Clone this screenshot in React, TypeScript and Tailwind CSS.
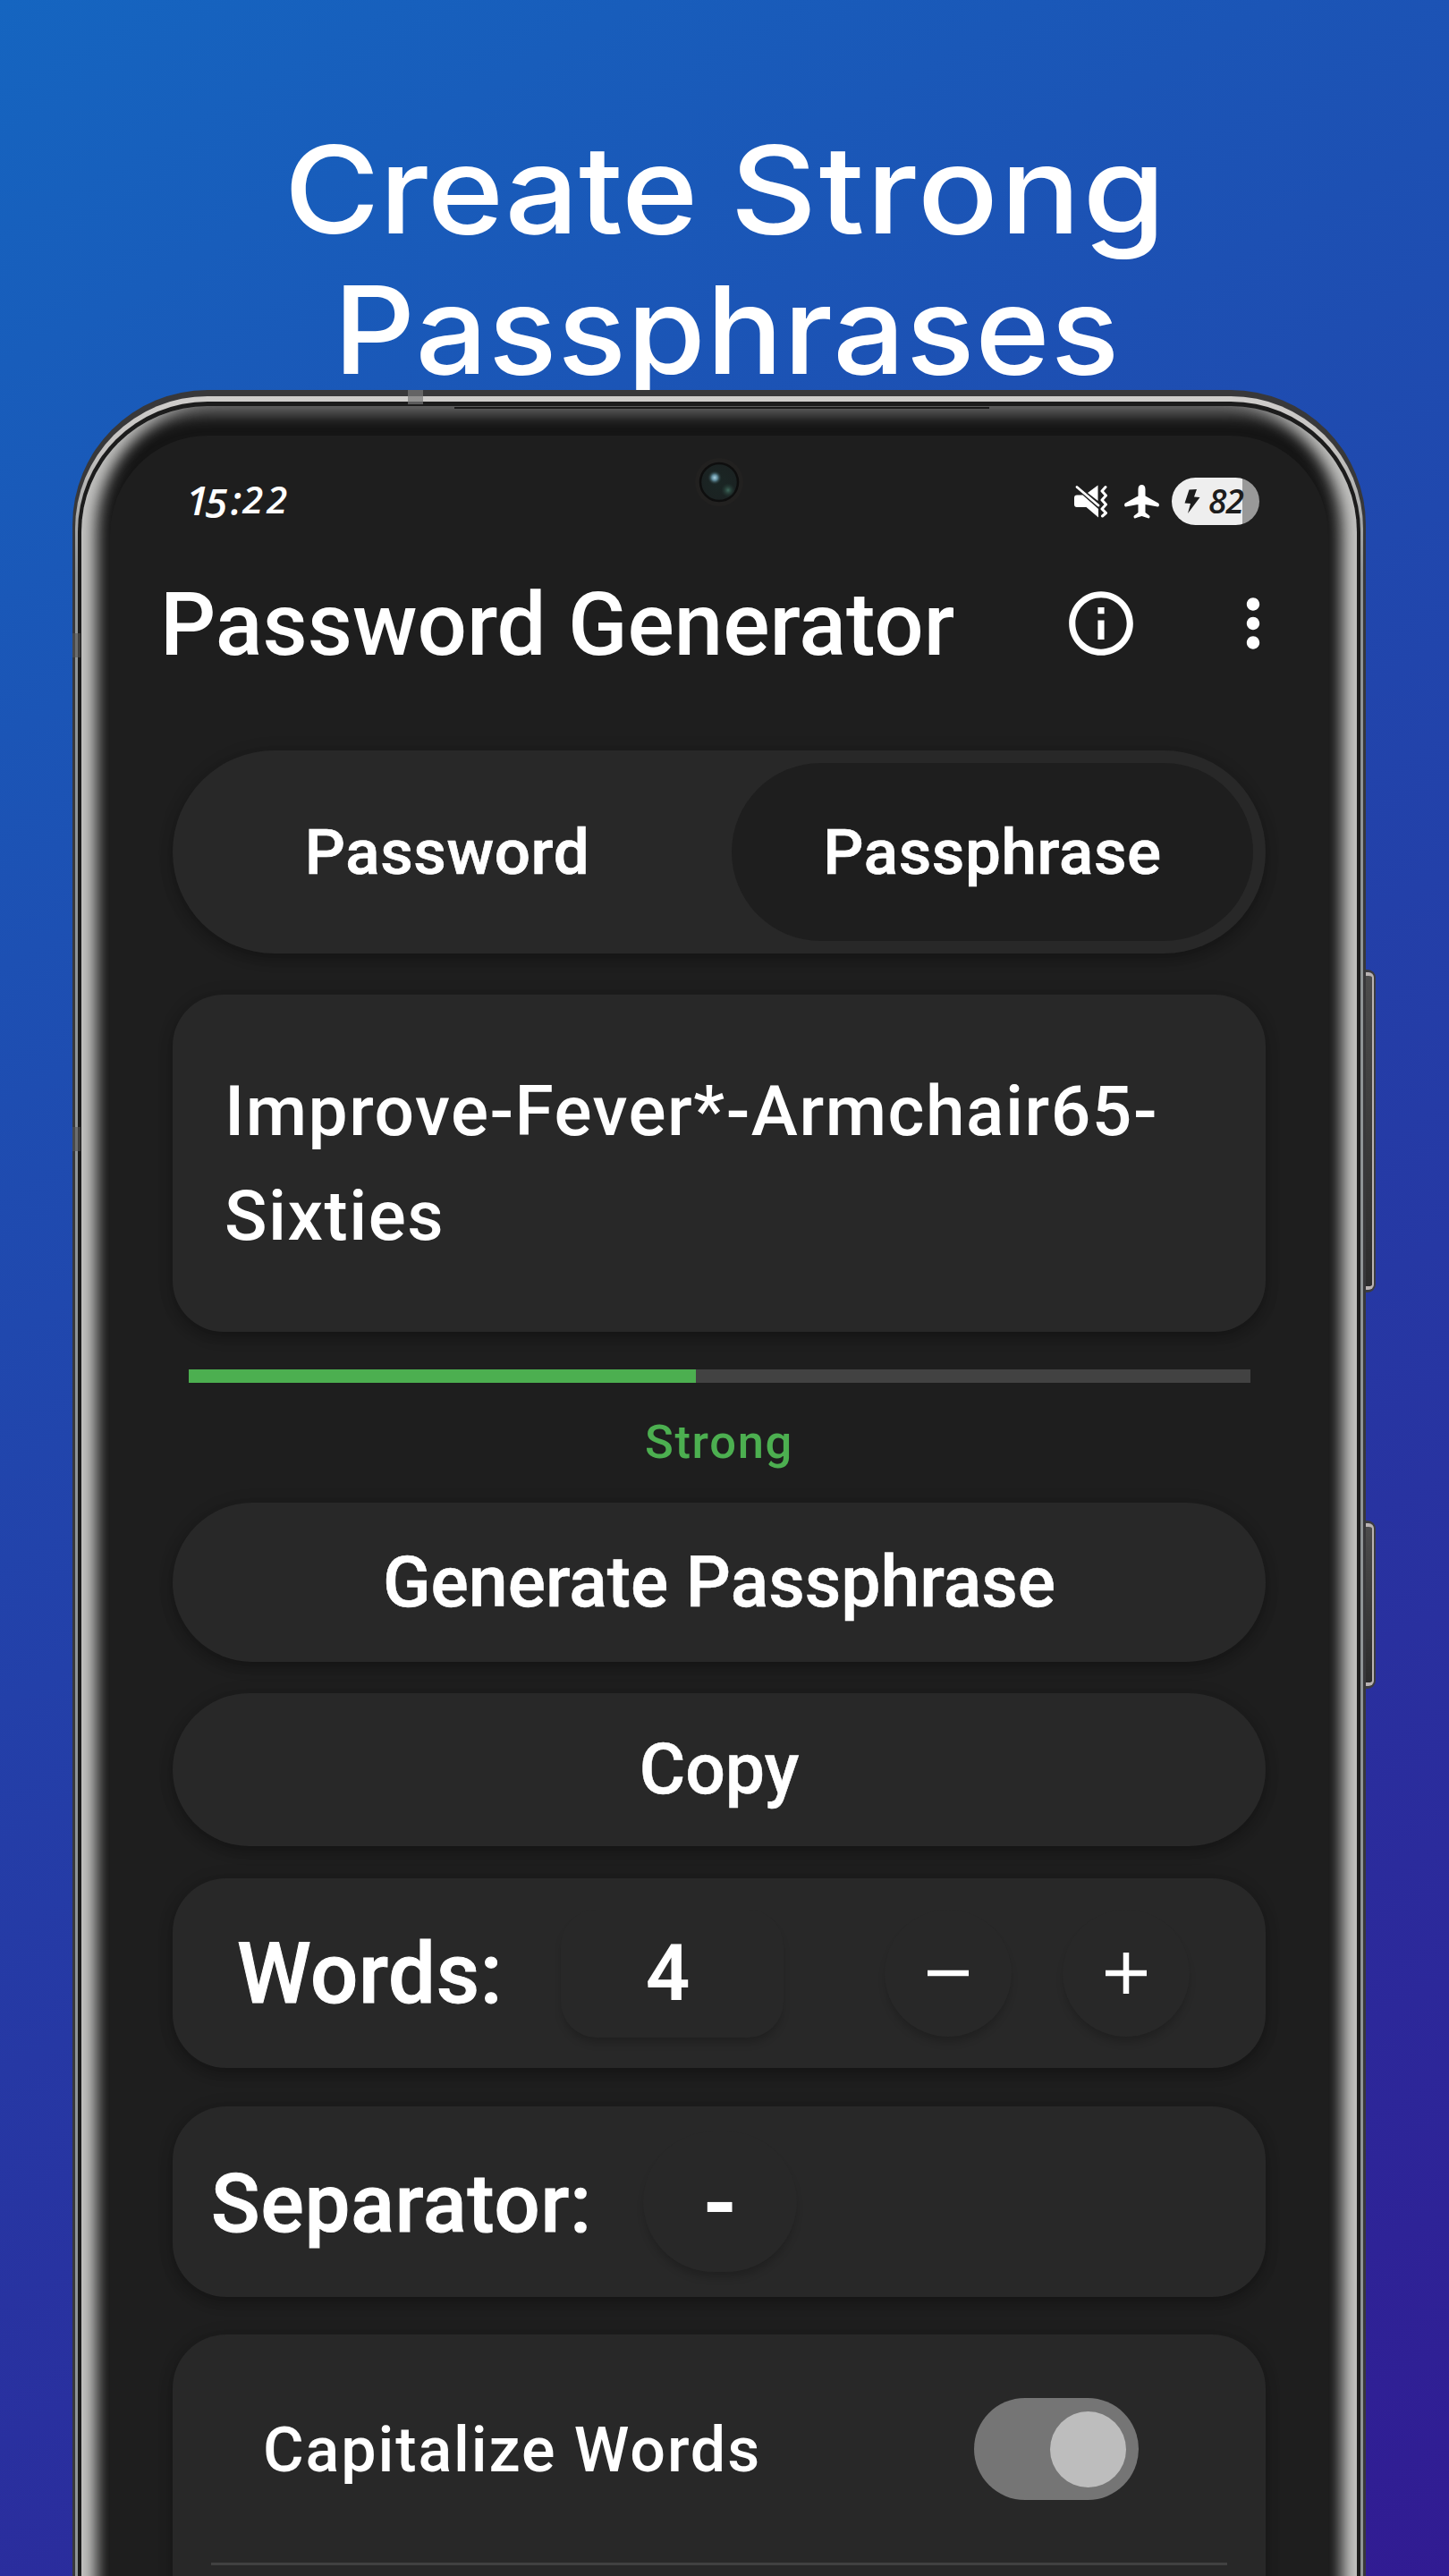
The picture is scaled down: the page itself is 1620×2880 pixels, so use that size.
import type { ReactNode } from "react";
import { MdInfoOutline, MdMoreVert } from "react-icons/md";

const SHADOW = "shadow-[0_8px_14px_0_rgba(0,0,0,0.22),0_0_18px_rgba(0,0,0,0.12)]";
const SOFT = "shadow-[0_8px_10px_-2px_rgba(0,0,0,0.2)]";

function StatusBar() {
  return (
    <div className="flex h-[53px] items-center pl-[85px] pr-[77px]">
      <div className="flex -translate-y-[3px] items-center font-['Open_Sans'] text-[46px] font-semibold italic leading-none tracking-[-1px] text-white">
        <span className="w-[21px]">1</span>
        <span className="w-[27px] translate-y-[3px]">5</span>
        <span className="w-[15px] text-center">:</span>
        <span className="w-[27px] text-[42px]">2</span>
        <span className="w-[24px] text-[42px]">2</span>
      </div>
      <svg viewBox="0 0 37 38" className="ml-auto h-[38px] w-[37px]" fill="#fff">
        <path d="M3 11.5h6.500L27 27v9.500L13.500 25H3a3 3 0 0 1-3-3v-7.500a3 3 0 0 1 3-3z" />
        <path d="M15 9 26.500.5V18z" />
        <path d="M3 2.500 27 23" stroke="#fff" strokeWidth="2.800" strokeLinecap="round" fill="none" />
        <path d="M35 2.500 31 7l4.500 5L31 17l4.500 5L31 27l4.500 4.500L31.500 35" stroke="#fff" strokeWidth="3" strokeLinecap="round" strokeLinejoin="round" fill="none" />
      </svg>
      <svg viewBox="0 0 39 38" className="ml-[19px] h-[38px] w-[39px]" fill="#fff">
        <path d="M19.500 0c2.400 0 4 1.800 4 5v7.500L38 20.500c1.500 1 1 4.500-.8 4L23.500 22v9l4.500 3.600c1 .9.500 3-.9 2.800L19.500 35l-7.600 2.400c-1.400.2-1.900-1.900-.9-2.800l4.500-3.600v-9L1.800 24.500c-1.800.5-2.300-3-.8-4l14.500-8V5c0-3.200 1.600-5 4-5z" />
      </svg>
      <div className="ml-[14px] flex h-[53px] w-[98px] items-center rounded-full bg-[linear-gradient(90deg,#eeeeee_80.5%,#999999_80.5%)] pl-[14px]">
        <svg viewBox="0 0 18 27" className="h-[27px] w-[18px]" fill="#1c1c1c">
          <path d="M5.500.5 14 0l-3 8.500 6.500.5L4 27l3-11-6.500-.5z" />
        </svg>
        <span className="ml-[9px] -translate-y-[1px] font-['Open_Sans'] text-[37px] font-semibold italic leading-none tracking-[-1px] text-[#1c1c1c]">82</span>
      </div>
    </div>
  );
}

function Camera() {
  return (
    <svg viewBox="0 0 56 56" className="absolute left-[653px] top-[24px] h-14 w-14">
      <defs>
        <radialGradient id="lens">
          <stop offset="0" stopColor="#1a2624" />
          <stop offset="1" stopColor="#1b2222" />
        </radialGradient>
        <radialGradient id="glint">
          <stop offset="0" stopColor="#a9d0e0" />
          <stop offset="0.4" stopColor="#5f8a9a" />
          <stop offset="1" stopColor="#1b2825" stopOpacity="0" />
        </radialGradient>
        <radialGradient id="glow">
          <stop offset="0" stopColor="#3f6a5c" />
          <stop offset="1" stopColor="#1f3530" stopOpacity="0" />
        </radialGradient>
      </defs>
      <circle cx="28" cy="28" r="27" fill="#222120" />
      <circle cx="28" cy="28" r="21" fill="url(#lens)" stroke="#0e0e0e" strokeWidth="2.500" />
      <circle cx="23" cy="23" r="8" fill="url(#glint)" />
      <circle cx="38" cy="37" r="8" fill="url(#glow)" />
    </svg>
  );
}

function ActionButton({ className, children }: { className: string; children: ReactNode }) {
  return (
    <button className={`flex w-full items-center justify-center rounded-full bg-[#282828] text-[78.800px] font-medium leading-none text-white [-webkit-text-stroke:0.5px_#fff] ${SHADOW} ${className}`}>
      {children}
    </button>
  );
}

function SideKey({ className }: { className: string }) {
  return (
    <div className={`absolute -right-[11px] w-[11px] rounded-r-[9px] bg-[#3c3c40] py-[3px] pr-[2px] ${className}`}>
      <div className="h-full rounded-r-[6px] border-y-4 border-r-2 border-[#b9b3b3] bg-gradient-to-b from-[#4c4c4c] to-[#2c2c2c]" />
    </div>
  );
}

export default function App() {
  return (
    <div className="relative flex h-[2880px] w-[1620px] flex-col overflow-hidden whitespace-nowrap bg-[linear-gradient(150deg,#1565c0,#311b92)] font-[Roboto,sans-serif]">
      <h1 className="flex h-[436px] shrink-0 flex-col items-center pt-[133px] font-[Inter,sans-serif] text-[136px] font-medium leading-[157px] text-white">
        <span className="flex -translate-x-[5px]">
          <span className="w-[512px] scale-x-[1.068] text-center">Create</span>{" "}
          <span className="w-[512px] scale-x-[1.1] text-center tracking-[2px]">Strong</span>
        </span>
        <span className="translate-x-[3px] scale-x-[1.045] tracking-[0.85px]">Passphrases</span>
      </h1>

      <div className="relative ml-[81px] flex w-[1446px] grow flex-col rounded-t-[151px] bg-[#38383a] px-[3px] pt-[7px]">
        <SideKey className="top-[648px] h-[361px]" />
        <SideKey className="top-[1264px] h-[188px]" />
        <div className="flex grow flex-col rounded-t-[148px] bg-[linear-gradient(180deg,#cfcdcb_0px,#c4c2c0_60px,#8f9496_200px)] px-[3px] pt-[6px]">
          <div className="flex grow flex-col rounded-t-[145px] bg-[#1c1c1c] px-[4px] pt-[5px]">
            <div className="flex grow flex-col rounded-t-[141px] bg-[#151515] px-[32px] pt-[33px] shadow-[inset_33px_0_18px_-16px_#c2c2c0,inset_-33px_0_18px_-16px_#c2c2c0,inset_0_10px_16px_0_#626262]">
              <main className="relative flex grow flex-col rounded-t-[110px] bg-[#1e1e1e]">
                <Camera />
                <div className="pt-[47px]">
                  <StatusBar />
                </div>

                <header className="mt-[55px] flex h-[110px] items-center pl-[56px] text-white">
                  <h2 className="translate-y-[2px] text-[97.700px] font-medium leading-none">Password Generator</h2>
                  <MdInfoOutline className="absolute left-[1065px] h-[86px] w-[86px]" />
                  <MdMoreVert className="absolute left-[1235px] h-[86px] w-[86px]" />
                </header>

                <div className="flex flex-col pl-[70px] pr-[70px] text-white">
                  <div className={`mt-[87px] flex h-[227px] rounded-full bg-[#282828] p-[14px] text-[71px] font-medium leading-none tracking-[0.600px] [-webkit-text-stroke:0.7px_#fff] ${SHADOW}`}>
                    <div className="flex w-[611px] items-center justify-center pr-[25px]">Password</div>
                    <div className="flex grow items-center justify-center rounded-full bg-[#1e1e1e]">Passphrase</div>
                  </div>

                  <div className={`mt-[46px] h-[377px] rounded-[57px] bg-[#282828] pl-[58px] pt-[72px] text-[78.500px] font-medium leading-[116.500px] tracking-[1.500px] ${SHADOW}`}>
                    Improve-Fever*-Armchair65-
                    <br />
                    Sixties
                  </div>

                  <div className="ml-[18px] mr-[17px] mt-[42px] h-[15px] bg-[#424242]">
                    <div className="h-full w-[567px] bg-[#4caf50]" />
                  </div>
                  <div className="mt-[36px] h-[60px] text-center text-[52.500px] font-medium leading-[60px] tracking-[1.700px] text-[#4caf50]">Strong</div>

                  <ActionButton className="mt-[38px] h-[178px]">Generate Passphrase</ActionButton>
                  <ActionButton className="mt-[35px] h-[171px]">Copy</ActionButton>

                  <div className={`mt-[36px] flex h-[212px] items-center rounded-[60px] bg-[#282828] pl-[72px] ${SHADOW}`}>
                    <span className="w-[362px] translate-y-px text-[94px] font-medium leading-none tracking-[0.700px] [-webkit-text-stroke:1px_#fff]">Words:</span>
                    <span className={`flex h-[143px] w-[249px] items-center justify-center rounded-[40px] pr-[10px] text-[87px] font-semibold leading-none ${SOFT} bg-[#282828]`}>4</span>
                    <span className={`ml-[113px] flex size-[142px] items-center justify-center rounded-full bg-[#282828] ${SOFT}`}>
                      <svg viewBox="0 0 46 46" className="size-[46px]" stroke="#fff" strokeWidth="6.500"><path d="M0 23h46" /></svg>
                    </span>
                    <span className={`ml-[57px] flex size-[142px] items-center justify-center rounded-full bg-[#282828] ${SOFT}`}>
                      <svg viewBox="0 0 46 46" className="size-[46px]" stroke="#fff" strokeWidth="6.500"><path d="M0 23h46M23 0v46" /></svg>
                    </span>
                  </div>

                  <div className={`mt-[43px] flex h-[213px] items-center rounded-[60px] bg-[#282828] pl-[43px] ${SHADOW}`}>
                    <span className="w-[483px] translate-y-[3px] text-[90px] font-medium leading-none tracking-[1px] [-webkit-text-stroke:1px_#fff]">Separator:</span>
                    <span className={`flex h-[157px] w-[172px] items-center justify-center rounded-full bg-[#282828] pt-[5px] text-[100px] font-bold leading-none ${SOFT}`}>-</span>
                  </div>

                  <div className={`mt-[42px] h-[400px] rounded-[60px] bg-[#282828] px-[43px] ${SHADOW}`}>
                    <div className="flex h-[258px] items-center border-b-[3px] border-[#414141] pl-[58px] pr-[99px] pt-px text-[70px]">
                      <span className="translate-y-px font-medium leading-none tracking-[1.900px]">Capitalize Words</span>
                      <span className="ml-auto flex h-[114px] w-[184px] items-center justify-end rounded-full bg-[#757575] pr-[14px]">
                        <span className="size-[85px] rounded-full bg-[#bdbdbd]" />
                      </span>
                    </div>
                  </div>
                </div>
              </main>
            </div>
          </div>
        </div>
        <div className="absolute left-[427px] top-[19px] h-[2px] w-[598px] bg-[#1a1a1a]" />
        <div className="absolute left-[375px] top-0 h-[16px] w-[17px] bg-[#777777]/70" />
        <div className="absolute left-0 top-[272px] h-[27px] w-[9px] bg-[#555555]/60" />
        <div className="absolute left-0 top-[824px] h-[27px] w-[9px] bg-[#555555]/60" />
      </div>
    </div>
  );
}
